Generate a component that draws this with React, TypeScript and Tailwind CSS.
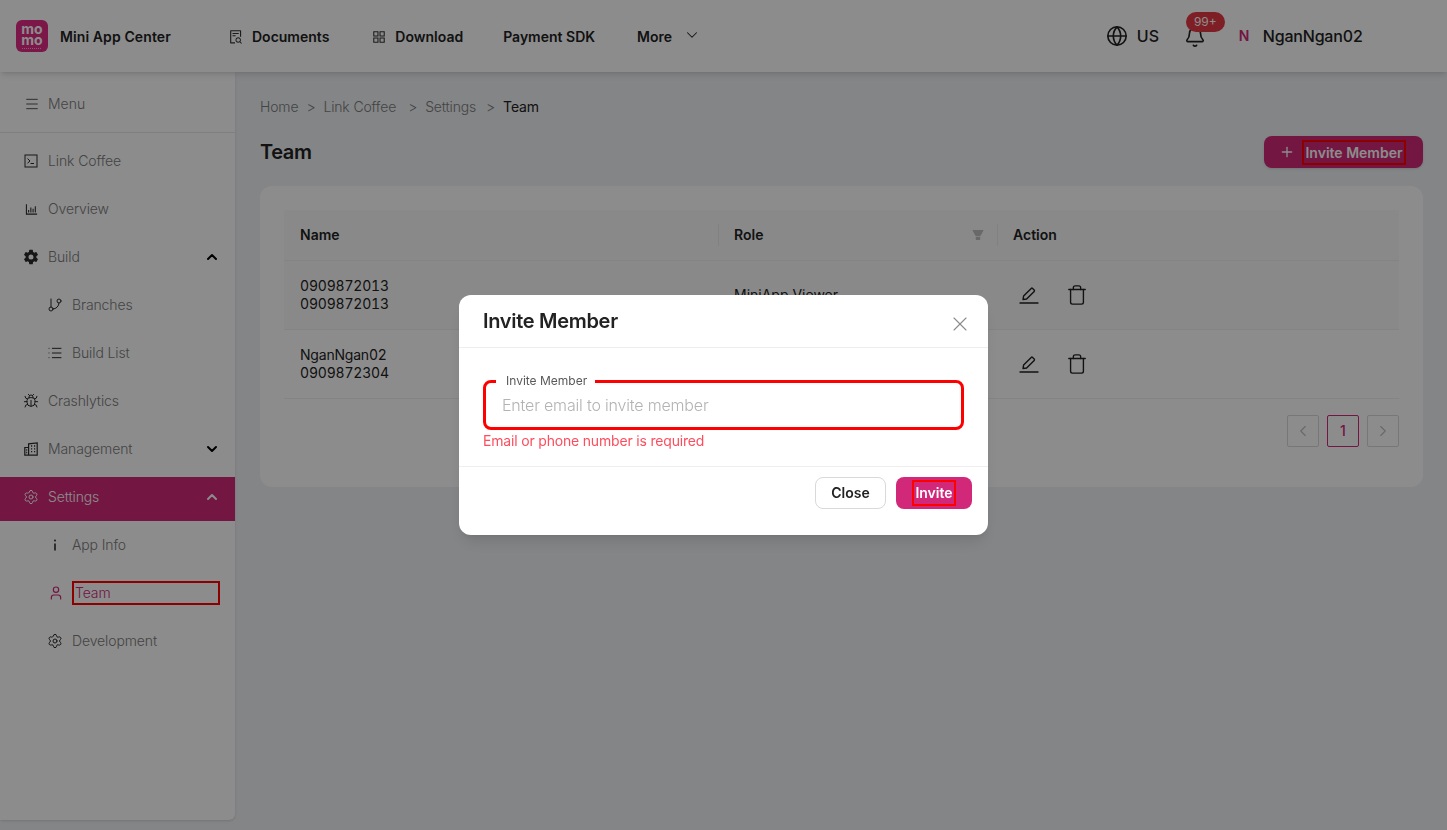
import { Bell, Bug, ChevronDown, ChevronLeft, ChevronRight, ChevronUp, GitBranch, Globe, List, Menu, Plus, Settings, Trash, User, X } from 'lucide-react'
import { AiFillFilter, AiOutlineAppstore, AiOutlineBarChart, AiOutlineFileSearch } from 'react-icons/ai'
import { IoSettingsSharp } from 'react-icons/io5'
import type { ReactNode } from 'react'

function Logo() {
  return (
    <svg className="w-8 h-8 shrink-0" viewBox="0 0 32 32">
      <rect width="32" height="32" rx="6" fill="#e02a85" />
      <text x="16" y="13.5" textAnchor="middle" fill="#fff" fontSize="14" fontWeight="700" fontFamily="Inter, sans-serif">mo</text>
      <text x="16" y="24.5" textAnchor="middle" fill="#fff" fontSize="14" fontWeight="700" fontFamily="Inter, sans-serif">mo</text>
      <path d="M6 28.5h20" stroke="#fff" strokeOpacity={0.6} strokeWidth={1} strokeDasharray="1 1" />
    </svg>
  )
}

function EditIcon() {
  return (
    <svg className="w-5 h-5" viewBox="0 0 20 20" fill="none" stroke="currentColor" strokeWidth={1.4} strokeLinejoin="round">
      <path d="M4 14.5l.6-3.4 7.6-7.7a1 1 0 011.4 0l1.6 1.6a1 1 0 010 1.4l-7.6 7.6-3.6.5z" />
      <path d="M1 18h18" strokeLinecap="round" />
    </svg>
  )
}

function TerminalIcon() {
  return (
    <svg className="w-3.5 h-3.5" viewBox="0 0 14 14" fill="none" stroke="currentColor" strokeWidth={1}>
      <rect x="1" y="1" width="12" height="12" />
      <path d="M3.5 4.5L6 7 3.5 9.2M6.5 9.5h3.5" />
    </svg>
  )
}

function InfoGlyph() {
  return (
    <svg className="w-3.5 h-3.5" viewBox="0 0 14 14" fill="currentColor">
      <rect x="6" y="1.5" width="2" height="2" rx="1" />
      <rect x="6.2" y="5.5" width="1.6" height="7" />
    </svg>
  )
}

function ManagementIcon() {
  return (
    <svg className="w-3.5 h-3.5" viewBox="0 0 14 14" fill="none" stroke="currentColor" strokeWidth={1.2}>
      <path d="M.8 13.2V5.5h3.8V13.2zM4.6 13.2V1.8l8.6-1v12.4z" />
      <path d="M7 4h1.2M10 4h1.2M7 6.8h1.2M10 6.8h1.2M7 9.6h1.2M10 9.6h1.2M2.2 8h1M2.2 10.5h1" strokeWidth={1.3} />
    </svg>
  )
}

function NavItem({ icon, label, chevron, sub }: { icon: ReactNode; label: string; chevron?: 'up' | 'down'; sub?: boolean }) {
  return (
    <div className={`h-12 flex items-center pr-[15px] ${sub ? 'pl-12' : 'pl-6'}`}>
      <span className="w-6 flex items-center text-[#2b2b2b]">{icon}</span>
      <span className="flex-1 text-sm font-light tracking-[-0.12px] text-[#7c7c7c]">{label}</span>
      {chevron === 'up' && <ChevronUp className="w-4 h-4 text-black" strokeWidth={3} />}
      {chevron === 'down' && <ChevronDown className="w-4 h-4 text-black" strokeWidth={3} />}
    </div>
  )
}

export default function App() {
  return (
    <div className="relative h-[830px] overflow-hidden bg-[#f0f2f5] font-['Inter',sans-serif] text-[#222]">
      {/* Top bar */}
      <header className="relative z-10 h-[72px] bg-white shadow-md flex items-center pl-4 pr-[84px]">
        <Logo />
        <span className="ml-3 text-sm font-semibold tracking-[0.1px] w-[168px] pt-0.5">Mini App Center</span>
        <nav className="flex items-center text-sm font-semibold pt-0.5">
          <AiOutlineFileSearch className="w-4 h-4 text-[#333] mr-2" />
          <span className="mr-[42px]">Documents</span>
          <AiOutlineAppstore className="w-4 h-4 text-[#333] mr-2" />
          <span className="mr-10">Download</span>
          <span className="mr-[42px]">Payment SDK</span>
          <span>More</span>
          <ChevronDown className="w-[18px] h-[18px] ml-[11px] -mt-1" strokeWidth={1.4} />
        </nav>
        <div className="ml-auto flex items-center text-base font-medium">
          <Globe className="w-[22px] h-[22px] mr-[9px]" strokeWidth={1.8} />
          <span className="w-[47px]">US</span>
          <div className="relative w-[55px]">
            <Bell className="w-[22px] h-[22px] mt-0.5" strokeWidth={1.8} />
            <span className="absolute -top-[12px] left-[2px] h-5 w-[39px] rounded-[10px] bg-[#e63946] text-white text-xs font-normal flex items-center justify-center">99+</span>
          </div>
          <span className="w-6 text-sm font-semibold text-[#d12879]">N</span>
          <span className="tabular-nums tracking-[-0.2px]">NganNgan02</span>
        </div>
      </header>

      <div className="flex">
        {/* Sidebar */}
        <aside className="w-[235px] h-[748px] bg-white rounded-br-md shadow-sm shrink-0">
          <div className="h-[61px] flex items-center pl-6 pt-1 border-b border-[#e8e8e8] text-[#7c7c7c] mb-1">
            <Menu className="w-4 h-4 mr-2 text-[#555]" strokeWidth={1.5} />
            <span className="text-sm font-light">Menu</span>
          </div>
          <NavItem icon={<TerminalIcon />} label="Link Coffee" />
          <NavItem icon={<AiOutlineBarChart className="w-[15px] h-[15px]" />} label="Overview" />
          <NavItem icon={<IoSettingsSharp className="w-4 h-4 -ml-px" />} label="Build" chevron="up" />
          <NavItem sub icon={<GitBranch className="w-4 h-4 -ml-px" strokeWidth={1.5} />} label="Branches" />
          <NavItem sub icon={<List className="w-4 h-4 -ml-px" strokeWidth={1.5} />} label="Build List" />
          <NavItem icon={<Bug className="w-4 h-4 -ml-px" strokeWidth={1.5} />} label="Crashlytics" />
          <NavItem icon={<ManagementIcon />} label="Management" chevron="down" />
          <div className="mt-1 h-11 flex items-center pl-6 pr-[15px] pb-1 bg-[#d12879] text-white">
            <Settings className="w-4 h-4 mr-[9px] -ml-px" strokeWidth={1.5} />
            <span className="flex-1 text-sm font-light tracking-[-0.12px]">Settings</span>
            <ChevronUp className="w-4 h-4" strokeWidth={3} />
          </div>
          <NavItem sub icon={<InfoGlyph />} label="App Info" />
          <div className="h-12 flex items-center pl-12 pr-[15px]">
            <User className="w-4 h-4 mr-2 text-[#d12879]" strokeWidth={1.8} />
            <span className="flex-1 h-6 outline-2 -outline-offset-2 outline-[#ff0000] pl-[3px] text-sm font-light leading-6 tracking-[-0.12px] text-[#d12879]">Team</span>
          </div>
          <NavItem sub icon={<Settings className="w-4 h-4 -ml-px" strokeWidth={1.5} />} label="Development" />
        </aside>

        {/* Main */}
        <main className="flex-1 pl-[25px] pr-6 pt-[25px]">
          <div className="text-sm font-light tracking-[-0.15px] text-[#7c7c7c] leading-5 flex">
            <span>Home</span>
            <span className="mx-2">&gt;</span>
            <span>Link Coffee</span>
            <span className="ml-3 mr-2">&gt;</span>
            <span>Settings</span>
            <span className="ml-[10px] mr-2">&gt;</span>
            <span className="text-[#222] font-normal">Team</span>
          </div>
          <div className="flex items-center justify-between mt-[19px] mb-[18px] h-8">
            <h1 className="text-xl font-semibold tracking-[-0.4px]">Team</h1>
            <button className="h-8 w-[159px] rounded-lg bg-[#d12879] text-white text-sm font-semibold flex items-center justify-center gap-[9px] pr-1 shadow-sm">
              <Plus className="w-4 h-4" strokeWidth={2} />
              <span className="outline-2 outline-[#ff0000] px-px pt-px -mb-px">Invite Member</span>
            </button>
          </div>

          <div className="bg-white rounded-xl h-[301px] p-6">
            <div className="grid grid-cols-[434px_279px_402px] bg-[#fafafa] h-[51px] items-center border-b border-[#f0f0f0] text-sm font-semibold">
              <div className="pl-4">Name</div>
              <div className="relative pl-4 flex items-center justify-between pr-3 before:absolute before:left-0 before:h-[22px] before:w-px before:bg-[#ececec]">
                Role
                <AiFillFilter className="w-3.5 h-3.5 text-[#bfbfbf]" />
              </div>
              <div className="relative pl-4 flex items-center before:absolute before:left-0 before:h-[22px] before:w-px before:bg-[#ececec]">Action</div>
            </div>
            <div className="grid grid-cols-[434px_279px_402px] bg-[#fafafa] h-[69px] items-center border-b border-[#f0f0f0] text-sm leading-[18px]">
              <div className="pl-4 tabular-nums tracking-[-0.2px]">0909872013<br />0909872013</div>
              <div className="pl-4">MiniApp Viewer</div>
              <div className="pl-[22px] flex items-center gap-[27px]">
                <EditIcon />
                <Trash className="w-[22px] h-[22px]" strokeWidth={1.5} />
              </div>
            </div>
            <div className="grid grid-cols-[434px_279px_402px] h-[69px] items-center border-b border-[#f0f0f0] text-sm leading-[18px]">
              <div className="pl-4 tabular-nums tracking-[-0.2px]">NganNgan02<br />0909872304</div>
              <div className="pl-4">MiniApp Viewer</div>
              <div className="pl-[22px] flex items-center gap-[27px]">
                <EditIcon />
                <Trash className="w-[22px] h-[22px]" strokeWidth={1.5} />
              </div>
            </div>
            <div className="flex justify-end gap-2 mt-4">
              <div className="w-8 h-8 border border-[#d9d9d9] rounded-[2px] flex items-center justify-center text-[#bfbfbf]">
                <ChevronLeft className="w-[18px] h-[18px]" strokeWidth={1.5} />
              </div>
              <div className="w-8 h-8 border border-[#d12879] rounded-[2px] flex items-center justify-center text-sm font-medium text-[#d12879]">1</div>
              <div className="w-8 h-8 border border-[#d9d9d9] rounded-[2px] flex items-center justify-center text-[#bfbfbf]">
                <ChevronRight className="w-[18px] h-[18px]" strokeWidth={1.5} />
              </div>
            </div>
          </div>
        </main>
      </div>

      {/* Mask and modal */}
      <div className="fixed inset-0 z-20 bg-black/45 flex items-center justify-center">
        <div className="w-[529px] h-[240px] bg-white rounded-xl shadow-lg">
          <div className="h-[53px] flex items-center justify-between pl-6 pr-4 border-b border-[#eeeeee]">
            <h2 className="text-xl font-semibold tracking-[-0.3px]">Invite Member</h2>
            <X className="w-6 h-6 text-[#8c8c8c] mt-[5px]" strokeWidth={1.1} />
          </div>
          <div className="h-[119px] px-6 pt-8 border-b border-[#eeeeee]">
            <div className="relative w-[481px] h-[50px] border-[3px] border-[#ff0000] rounded-lg flex items-center pl-4">
              <span className="absolute -top-[9px] left-[10px] pl-2.5 pr-2 bg-white text-xs text-[#595959] leading-[14px]">Invite Member</span>
              <span className="text-base font-light tracking-[-0.18px] text-[#b3b3b3]">Enter email to invite member</span>
            </div>
            <p className="mt-px text-sm tracking-[-0.18px] text-[#ff4d5e] leading-5">Email or phone number is required</p>
          </div>
          <div className="flex justify-end gap-2.5 pt-[10px] pr-4">
            <button className="w-[71px] h-8 rounded-lg border border-[#d9d9d9] bg-white text-sm font-semibold">Close</button>
            <button className="w-[76px] h-8 rounded-lg bg-[#d12879] text-white text-sm font-semibold flex items-center justify-center">
              <span className="outline-2 outline-[#ff0000] px-px py-px">Invite</span>
            </button>
          </div>
        </div>
      </div>
    </div>
  )
}
